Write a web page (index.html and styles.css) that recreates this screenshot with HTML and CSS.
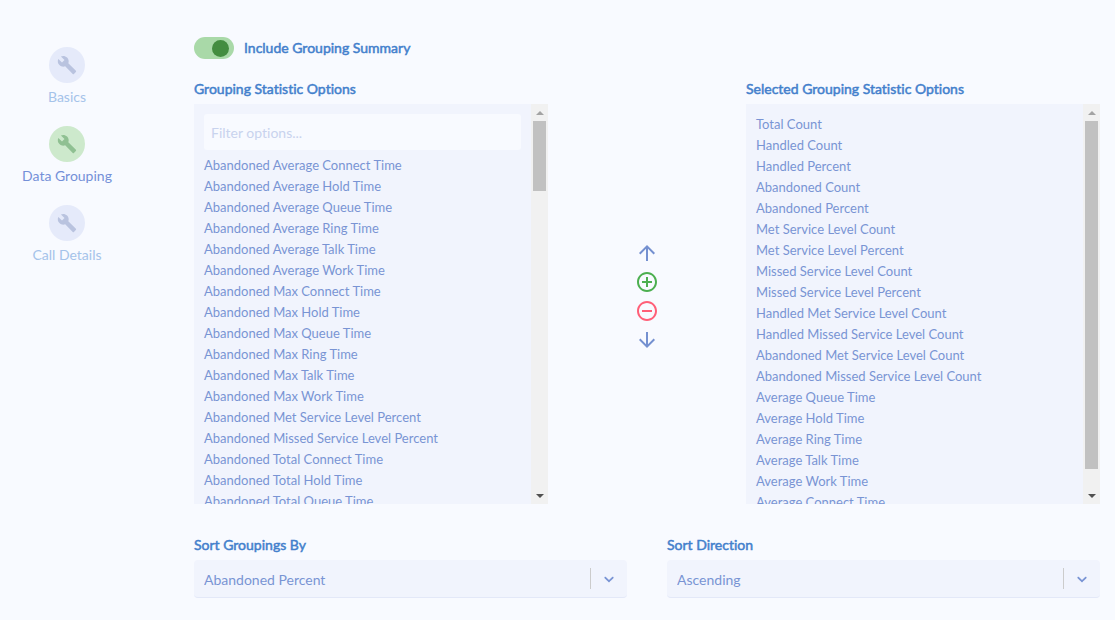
FILE: index.html
```html
<!DOCTYPE html>
<html lang="en">
<head>
  <meta charset="UTF-8">
  <meta name="viewport" content="width=device-width, initial-scale=1.0">
  <title>Data Grouping</title>
  <link rel="stylesheet" href="styles.css">
</head>
<body>
  <svg class="sprite" aria-hidden="true">
    <symbol id="wrench" viewBox="0 0 24 24">
      <path d="M22.7 19l-9.1-9.1c.9-2.3.4-5-1.5-6.9-2-2-5-2.4-7.4-1.3L9 6 6 9 1.6 4.7C.4 7.1.9 10.1 2.9 12.1c1.9 1.9 4.6 2.4 6.9 1.5l9.1 9.1c.4.4 1 .4 1.4 0l2.3-2.3c.5-.4.5-1.1.1-1.4z"/>
    </symbol>
    <symbol id="chevron" viewBox="0 0 20 20">
      <path d="M4.516 7.548c0.436-0.446 1.043-0.481 1.576 0l3.908 3.747 3.908-3.747c0.533-0.481 1.141-0.446 1.574 0 0.436 0.445 0.408 1.197 0 1.615-0.406 0.418-4.695 4.502-4.695 4.502-0.217 0.223-0.502 0.335-0.787 0.335s-0.57-0.112-0.789-0.335c0 0-4.287-4.084-4.695-4.502s-0.436-1.17 0-1.615z"/>
    </symbol>
  </svg>

  <div class="page">
    <nav class="steps">
      <a class="step" href="#basics">
        <span class="step-icon"><svg><use href="#wrench"/></svg></span>
        Basics
      </a>
      <a class="step active" href="#data-grouping">
        <span class="step-icon"><svg><use href="#wrench"/></svg></span>
        Data Grouping
      </a>
      <a class="step" href="#call-details">
        <span class="step-icon"><svg><use href="#wrench"/></svg></span>
        Call Details
      </a>
    </nav>

    <main class="content">
      <label class="toggle">
        <input type="checkbox" class="toggle-input" checked>
        <span class="heading">Include Grouping Summary</span>
      </label>

      <div class="picker">
        <section class="picker-side">
          <h2 class="heading">Grouping Statistic Options</h2>
          <div class="panel">
            <div class="panel-body">
              <input type="text" class="filter" placeholder="Filter options..." aria-label="Filter options">
              <ul class="options">
                <li><button>Abandoned Average Connect Time</button></li>
                <li><button>Abandoned Average Hold Time</button></li>
                <li><button>Abandoned Average Queue Time</button></li>
                <li><button>Abandoned Average Ring Time</button></li>
                <li><button>Abandoned Average Talk Time</button></li>
                <li><button>Abandoned Average Work Time</button></li>
                <li><button>Abandoned Max Connect Time</button></li>
                <li><button>Abandoned Max Hold Time</button></li>
                <li><button>Abandoned Max Queue Time</button></li>
                <li><button>Abandoned Max Ring Time</button></li>
                <li><button>Abandoned Max Talk Time</button></li>
                <li><button>Abandoned Max Work Time</button></li>
                <li><button>Abandoned Met Service Level Percent</button></li>
                <li><button>Abandoned Missed Service Level Percent</button></li>
                <li><button>Abandoned Total Connect Time</button></li>
                <li><button>Abandoned Total Hold Time</button></li>
                <li><button>Abandoned Total Queue Time</button></li>
              </ul>
            </div>
            <div class="scrollbar" aria-hidden="true">
              <span class="scroll-arrow up"></span>
              <div class="scroll-track"><div class="scroll-thumb" style="height: 19%"></div></div>
              <span class="scroll-arrow down"></span>
            </div>
          </div>
        </section>

        <div class="actions">
          <button aria-label="Move up"><svg class="arrow" viewBox="0 0 24 24"><path d="M4 12l1.41 1.41L11 7.83V20h2V7.83l5.58 5.59L20 12l-8-8-8 8z"/></svg></button>
          <button aria-label="Add"><svg class="add" viewBox="0 0 24 24"><path d="M13 7h-2v4H7v2h4v4h2v-4h4v-2h-4V7zm-1-5C6.48 2 2 6.48 2 12s4.48 10 10 10 10-4.48 10-10S17.52 2 12 2zm0 18c-4.41 0-8-3.59-8-8s3.59-8 8-8 8 3.59 8 8-3.59 8-8 8z"/></svg></button>
          <button aria-label="Remove"><svg class="remove" viewBox="0 0 24 24"><path d="M7 11v2h10v-2H7zm5-9C6.48 2 2 6.48 2 12s4.48 10 10 10 10-4.48 10-10S17.52 2 12 2zm0 18c-4.41 0-8-3.59-8-8s3.59-8 8-8 8 3.59 8 8-3.59 8-8 8z"/></svg></button>
          <button aria-label="Move down"><svg class="arrow" viewBox="0 0 24 24"><path d="M20 12l-1.41-1.41L13 16.17V4h-2v12.17l-5.58-5.59L4 12l8 8 8-8z"/></svg></button>
        </div>

        <section class="picker-side">
          <h2 class="heading">Selected Grouping Statistic Options</h2>
          <div class="panel">
            <div class="panel-body">
              <ul class="options">
                <li><button>Total Count</button></li>
                <li><button>Handled Count</button></li>
                <li><button>Handled Percent</button></li>
                <li><button>Abandoned Count</button></li>
                <li><button>Abandoned Percent</button></li>
                <li><button>Met Service Level Count</button></li>
                <li><button>Met Service Level Percent</button></li>
                <li><button>Missed Service Level Count</button></li>
                <li><button>Missed Service Level Percent</button></li>
                <li><button>Handled Met Service Level Count</button></li>
                <li><button>Handled Missed Service Level Count</button></li>
                <li><button>Abandoned Met Service Level Count</button></li>
                <li><button>Abandoned Missed Service Level Count</button></li>
                <li><button>Average Queue Time</button></li>
                <li><button>Average Hold Time</button></li>
                <li><button>Average Ring Time</button></li>
                <li><button>Average Talk Time</button></li>
                <li><button>Average Work Time</button></li>
                <li><button>Average Connect Time</button></li>
              </ul>
            </div>
            <div class="scrollbar" aria-hidden="true">
              <span class="scroll-arrow up"></span>
              <div class="scroll-track"><div class="scroll-thumb" style="height: 95%"></div></div>
              <span class="scroll-arrow down"></span>
            </div>
          </div>
        </section>
      </div>

      <div class="sorting">
        <div class="field">
          <label class="heading" for="sort-by">Sort Groupings By</label>
          <div class="select">
            <select id="sort-by">
              <option>Abandoned Percent</option>
            </select>
            <span class="select-arrow"><svg><use href="#chevron"/></svg></span>
          </div>
        </div>
        <div class="field">
          <label class="heading" for="sort-direction">Sort Direction</label>
          <div class="select">
            <select id="sort-direction">
              <option>Ascending</option>
              <option>Descending</option>
            </select>
            <span class="select-arrow"><svg><use href="#chevron"/></svg></span>
          </div>
        </div>
      </div>
    </main>
  </div>
</body>
</html>
```
FILE: styles.css
```css
* { margin: 0; padding: 0; box-sizing: border-box; }

body {
  font-family: Lato, sans-serif;
  font-size: 14px;
  font-variant-ligatures: none;
  line-height: 21px;
  color: #7994d4;
  background-color: #f8faff;
}
button, input, select {
  font: inherit;
  color: inherit;
  border: none;
  background: none;
}
button, select { cursor: pointer; }
svg { display: block; fill: currentColor; }
.sprite { display: none; }

.page {
  display: flex;
  gap: 60px;
  padding: 37px 15px 20px 0;
}

/* wizard steps */
.steps {
  flex: 0 0 134px;
  display: flex;
  flex-direction: column;
  gap: 19px;
  padding-top: 10px;
}
.step {
  display: flex;
  flex-direction: column;
  align-items: center;
  gap: 4px;
  line-height: 20px;
  color: #a5c3ea;
  text-decoration: none;
}
.step.active { color: #7490d8; }
.step-icon {
  display: flex;
  align-items: center;
  justify-content: center;
  width: 36px;
  height: 36px;
  border-radius: 50%;
  background-color: #e5eafa;
  color: #b9c3df;
}
.step-icon svg { width: 20px; height: 20px; }
.step.active .step-icon {
  background-color: #cde9cc;
  color: #8fc092;
}

.content { flex: 1; min-width: 0; }

.heading {
  font-size: 14px;
  font-weight: 400;
  line-height: 20px;
  color: #4380cc;
  -webkit-text-stroke: 0.5px #4380cc;
}

.toggle {
  display: flex;
  align-items: center;
  gap: 10px;
  cursor: pointer;
}
.toggle-input {
  appearance: none;
  display: flex;
  align-items: center;
  width: 40px;
  height: 22px;
  padding: 0 5px;
  border-radius: 11px;
  background-color: #d5dcef;
}
.toggle-input::before {
  content: "";
  width: 17px;
  height: 17px;
  border-radius: 50%;
  background-color: #8c9cc4;
}
.toggle-input:checked {
  justify-content: flex-end;
  background-color: #a9d9a8;
}
.toggle-input:checked::before { background-color: #438d40; }

/* two lists with the move buttons between them */
.picker {
  display: flex;
  margin-top: 20px;
}
.picker-side { flex: 1; min-width: 0; }
.panel {
  display: flex;
  height: 400px;
  margin-top: 5px;
  background-color: #f1f4fd;
}
.panel-body {
  flex: 1;
  padding: 10px;
  overflow-y: auto;
  scrollbar-width: none;
}
.filter {
  display: block;
  width: 100%;
  height: 36px;
  margin-bottom: 5px;
  padding: 0 7px;
  border-radius: 3px;
  background-color: #f8faff;
}
.filter::placeholder { color: #c8d3ee; }
.options {
  list-style: none;
  font-size: 13px;
}
.options button {
  display: block;
  width: 100%;
  text-align: left;
}

.scrollbar {
  display: flex;
  flex-direction: column;
  width: 17px;
  background-color: #f1f1f1;
}
.scroll-track { flex: 1; padding: 0 2px; }
.scroll-thumb { background-color: #c1c1c1; }
.scroll-arrow {
  display: flex;
  align-items: center;
  justify-content: center;
  height: 17px;
}
.scroll-arrow::before {
  content: "";
  border: 4px solid transparent;
  border-width: 0 4px;
}
.scroll-arrow.up::before { border-bottom: 4px solid #a3a3a3; }
.scroll-arrow.down::before { border-top: 4px solid #505050; }

.actions {
  flex: 0 0 198px;
  display: flex;
  flex-direction: column;
  align-items: center;
  justify-content: center;
  gap: 5px;
  padding-top: 10px;
}
.actions svg { width: 24px; height: 24px; }
.arrow { color: #7490d0; }
.add { color: #4caf50; }
.remove { color: #ff5f78; }

.sorting {
  display: flex;
  gap: 40px;
  margin-top: 31px;
}
.field { flex: 1; }
.field .heading { display: block; }
.select {
  position: relative;
  margin-top: 5px;
}
.select select {
  appearance: none;
  display: block;
  width: 100%;
  height: 38px;
  padding: 2px 46px 0 10px;
  border-radius: 4px;
  border-bottom: 1px solid #e3e8f8;
  background-color: #f1f4fd;
}
.select-arrow {
  position: absolute;
  top: 8px;
  right: 0;
  display: flex;
  align-items: center;
  height: 21px;
  padding: 0 10px;
  border-left: 1px solid #cccccc;
  pointer-events: none;
}
.select-arrow svg { width: 16px; height: 16px; }
```
